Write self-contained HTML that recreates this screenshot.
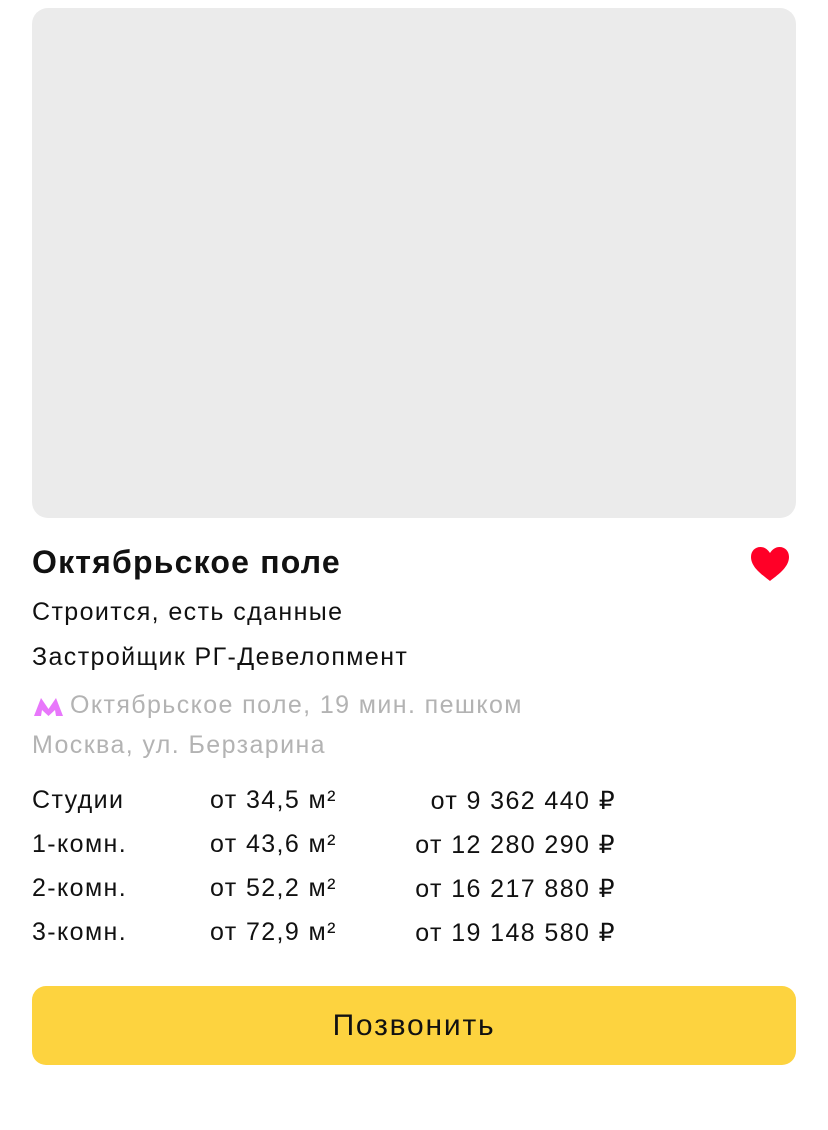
<!DOCTYPE html>
<html><head><meta charset="utf-8"><style>
*{margin:0;padding:0;box-sizing:border-box}
body{width:828px;height:1130px;background:#fff;font-family:"Liberation Sans",sans-serif;color:#111;position:relative;overflow:hidden}
.img{position:absolute;left:32px;top:8px;width:764px;height:510px;background:#ebebeb;border-radius:16px}
.t{position:absolute;left:32px;white-space:nowrap}
.h{top:544px;font-size:32px;font-weight:bold;letter-spacing:1.2px}
.s{font-size:25px;line-height:30px;letter-spacing:1.4px}
.g{color:#b3b3b3}
.row{position:absolute;left:32px;width:600px;font-size:25px;height:30px;letter-spacing:1.4px}
.row span{position:absolute;top:0}
.c2{left:178px}
.c3{right:16px;text-align:right}
.btn{position:absolute;left:32px;top:986px;width:764px;height:79px;background:#fdd33f;border-radius:14px;font-size:30px;letter-spacing:1.8px;text-align:center;line-height:79px}
</style></head><body>
<div class="img"></div>
<div class="t h">Октябрьское поле</div>
<svg style="position:absolute;left:750px;top:546px" width="40" height="36" viewBox="0 0 40 36"><path d="M20 35C14 30 1 22 1 11 1 5 5 1 10.5 1 15 1 18 4 20 7 22 4 25 1 29.5 1 35 1 39 5 39 11 39 22 26 30 20 35Z" fill="#ff0027"/></svg>
<div class="t s" style="top:597px">Строится, есть сданные</div>
<div class="t s" style="top:642px">Застройщик РГ-Девелопмент</div>
<svg style="position:absolute;left:34px;top:697px" width="29" height="19" viewBox="0 0 29 19"><path d="M0 19L7 1 14.5 12 22 1 29 19 22 19 21 13 14.5 19 8 13 7 19Z" fill="#e877fb"/></svg>
<div class="t s g" style="left:70px;top:690px">Октябрьское поле, 19 мин. пешком</div>
<div class="t s g" style="top:730px">Москва, ул. Берзарина</div>
<div class="row" style="top:786px"><span>Студии</span><span class="c2">от 34,5 м²</span><span class="c3">от 9 362 440 ₽</span></div>
<div class="row" style="top:830px"><span>1-комн.</span><span class="c2">от 43,6 м²</span><span class="c3">от 12 280 290 ₽</span></div>
<div class="row" style="top:874px"><span>2-комн.</span><span class="c2">от 52,2 м²</span><span class="c3">от 16 217 880 ₽</span></div>
<div class="row" style="top:918px"><span>3-комн.</span><span class="c2">от 72,9 м²</span><span class="c3">от 19 148 580 ₽</span></div>
<div class="btn">Позвонить</div>
</body></html>
